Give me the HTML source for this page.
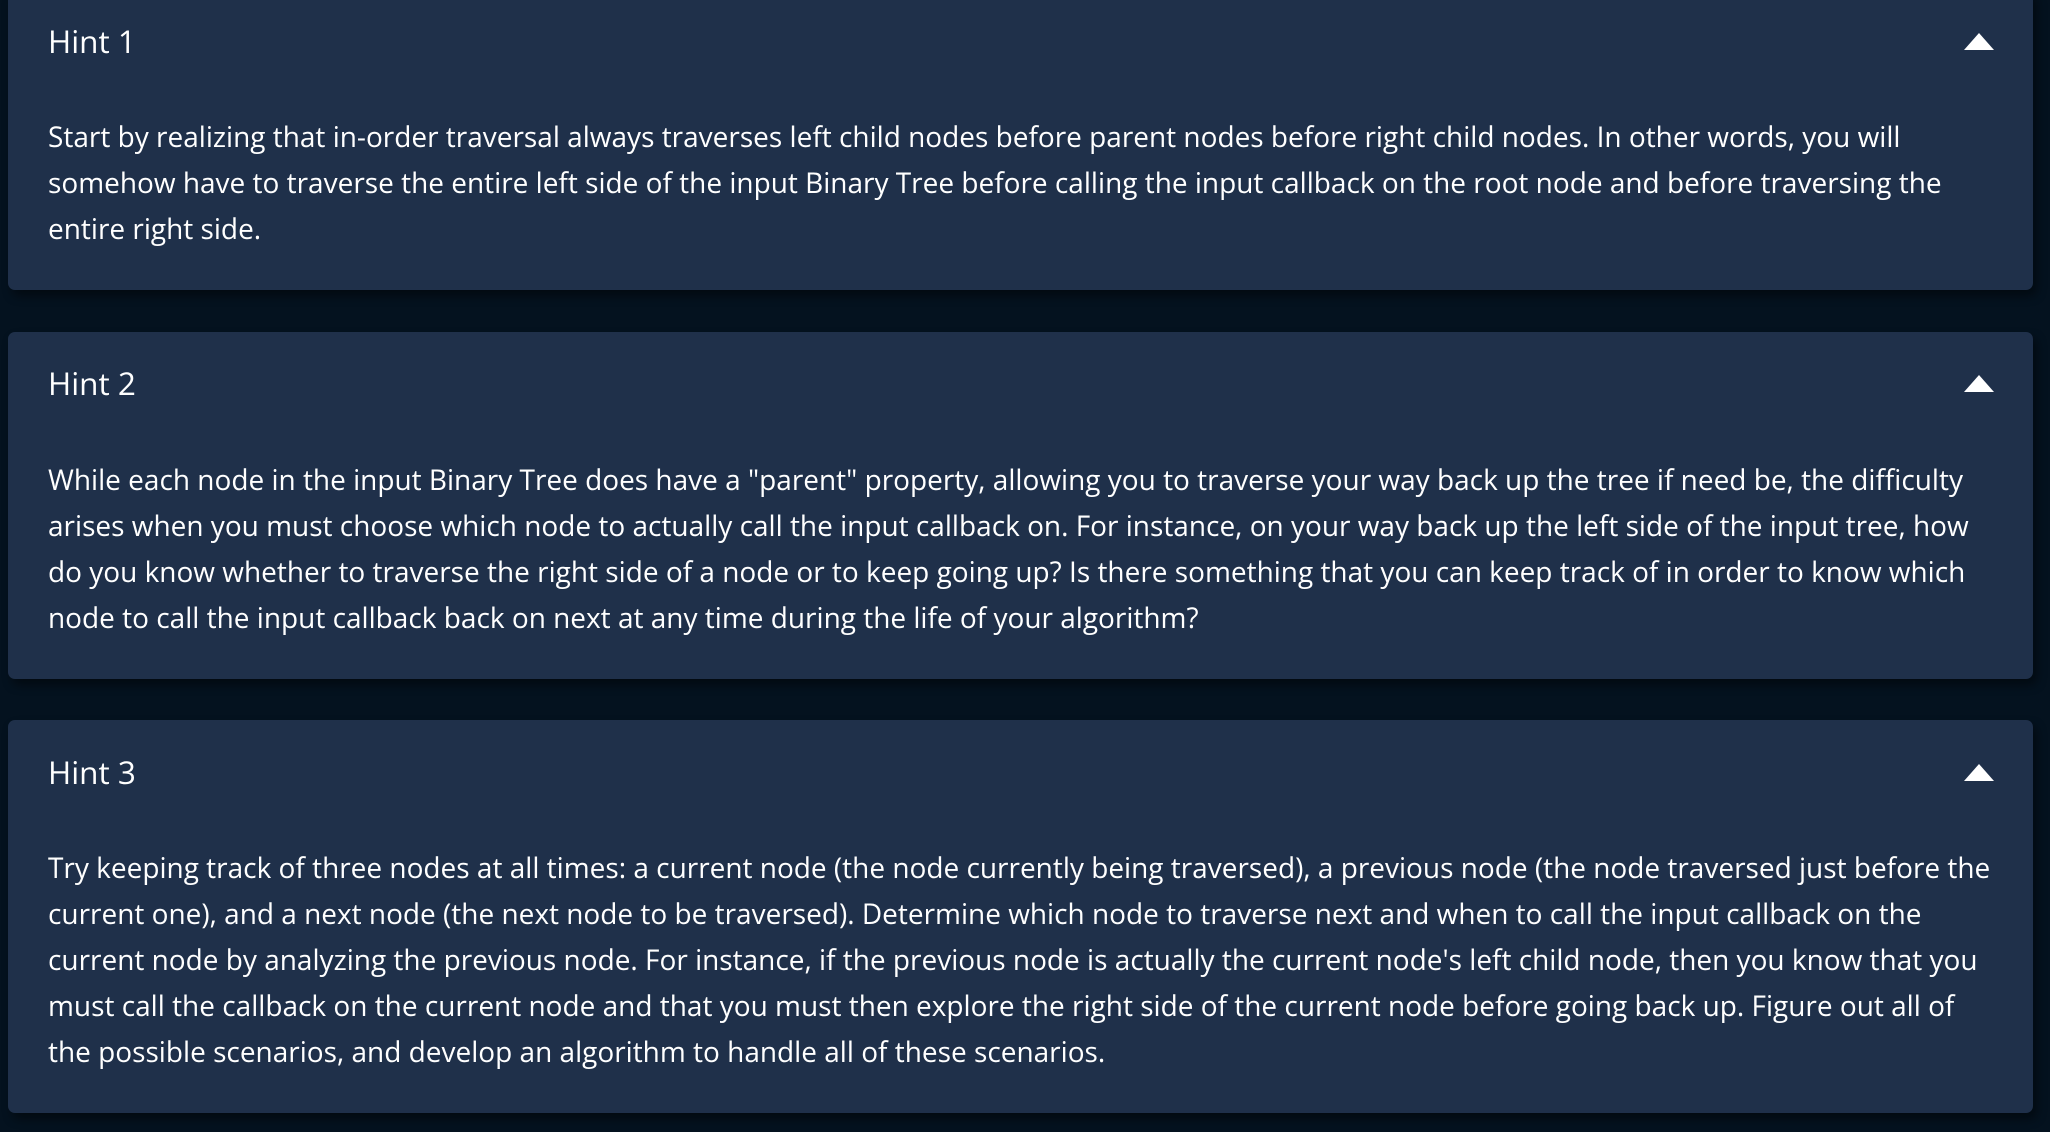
<!DOCTYPE html>
<html><head><meta charset="utf-8"><style>
html,body{margin:0;padding:0;width:2050px;height:1132px;overflow:hidden;background:#04121f;}
body{font-family:"Open Sans","Liberation Sans","DejaVu Sans",sans-serif;color:#fff;position:relative;}
.card{position:absolute;left:8px;width:2025px;background:#1f304a;border-radius:7px;box-shadow:4px 6px 10px rgba(0,0,0,0.45);}
.t{position:absolute;left:40px;font-size:31.5px;line-height:40px;}
.b{position:absolute;left:40px;width:1990px;font-size:28px;line-height:46px;white-space:nowrap;}
.arr{position:absolute;left:1956px;width:0;height:0;border-left:15px solid transparent;border-right:15px solid transparent;border-bottom:17px solid #fff;}
</style></head><body>
<div class="card" style="top:-10px;height:300px">
<div class="t" style="top:32px">Hint 1</div>
<div class="arr" style="top:43px"></div>
<div class="b" style="top:124px">Start by realizing that in-order traversal always traverses left child nodes before parent nodes before right child nodes. In other words, you will<br>somehow have to traverse the entire left side of the input Binary Tree before calling the input callback on the root node and before traversing the<br>entire right side.</div>
</div>
<div class="card" style="top:332px;height:347px">
<div class="t" style="top:32px">Hint 2</div>
<div class="arr" style="top:43px"></div>
<div class="b" style="top:125px">While each node in the input Binary Tree does have a "parent" property, allowing you to traverse your way back up the tree if need be, the difficulty<br>arises when you must choose which node to actually call the input callback on. For instance, on your way back up the left side of the input tree, how<br>do you know whether to traverse the right side of a node or to keep going up? Is there something that you can keep track of in order to know which<br>node to call the input callback back on next at any time during the life of your algorithm?</div>
</div>
<div class="card" style="top:720px;height:393px">
<div class="t" style="top:33px">Hint 3</div>
<div class="arr" style="top:44px"></div>
<div class="b" style="top:125px">Try keeping track of three nodes at all times: a current node (the node currently being traversed), a previous node (the node traversed just before the<br>current one), and a next node (the next node to be traversed). Determine which node to traverse next and when to call the input callback on the<br>current node by analyzing the previous node. For instance, if the previous node is actually the current node's left child node, then you know that you<br>must call the callback on the current node and that you must then explore the right side of the current node before going back up. Figure out all of<br>the possible scenarios, and develop an algorithm to handle all of these scenarios.</div>
</div>
</body></html>
